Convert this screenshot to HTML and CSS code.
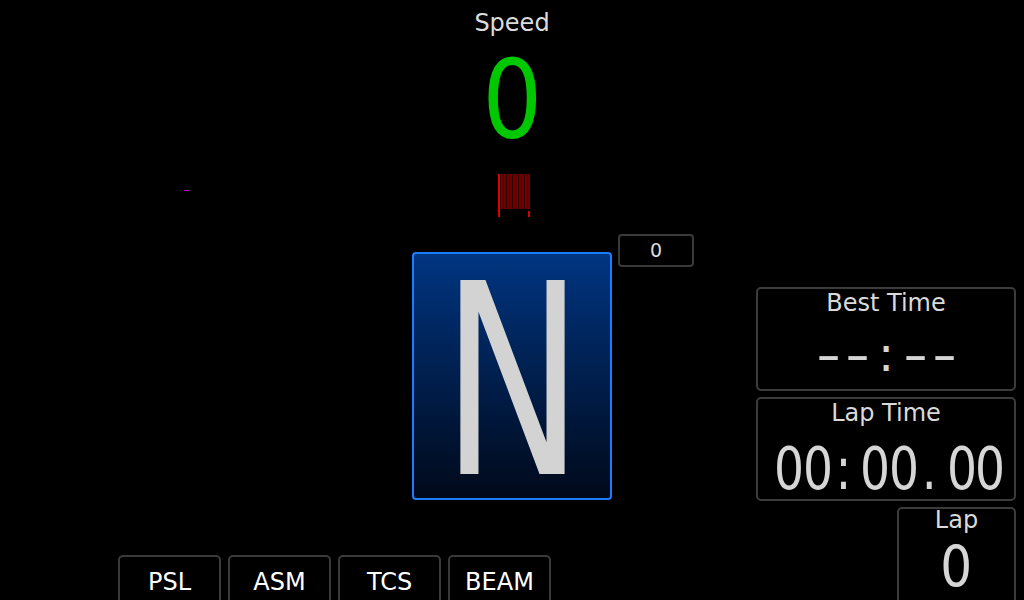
FILE: index.html
```html
<!DOCTYPE html>
<html lang="en">
<head>
<meta charset="utf-8">
<title>Dashboard</title>
<link rel="stylesheet" href="styles.css">
</head>
<body>
<div class="screen">
  <header class="top">
    <div class="speed-label">Speed</div>
    <div class="speed-value">0</div>
    <div class="rev-bar">
      <span class="rev-start"></span>
      <span class="rev-track">
        <span class="rev-fill"></span>
        <span class="rev-end"></span>
      </span>
    </div>
    <span class="marker"></span>
  </header>

  <div class="gear"><span class="gear-letter">N</span></div>
  <div class="mini-box">0</div>

  <aside class="timing">
    <section class="panel">
      <div class="panel-title">Best Time</div>
      <div class="best-value"><span class="cell dash">-</span><span class="cell dash">-</span><span class="cell">:</span><span class="cell dash">-</span><span class="cell dash">-</span></div>
    </section>
    <section class="panel">
      <div class="panel-title">Lap Time</div>
      <div class="lap-time-value"><span class="cell">0</span><span class="cell">0</span><span class="cell">:</span><span class="cell">0</span><span class="cell">0</span><span class="cell">.</span><span class="cell">0</span><span class="cell">0</span></div>
    </section>
    <section class="panel lap-panel">
      <div class="panel-title lap-title">Lap</div>
      <div class="lap-value">0</div>
    </section>
  </aside>

  <nav class="buttons">
    <div class="btn">PSL</div>
    <div class="btn">ASM</div>
    <div class="btn">TCS</div>
    <div class="btn">BEAM</div>
  </nav>
</div>
</body>
</html>
```
FILE: styles.css
```css
* { box-sizing: border-box; }

body {
  margin: 0;
  background: #000;
}

.screen {
  width: 1024px;
  height: 600px;
  overflow: hidden;
  background: #000;
  display: grid;
  grid-template-columns: 118px 294px 200px 144px 260px 8px;
  grid-template-rows: 252px 249px 99px;
  font-family: "DejaVu Sans", sans-serif;
  color: #dadada;
}

/* ---------- top: speed ---------- */
.top {
  grid-column: 1 / -1;
  grid-row: 1;
  display: flex;
  flex-direction: column;
  align-items: center;
  position: relative;
  padding-top: 9px;
}

.speed-label {
  font-size: 24px;
  line-height: 28px;
  color: #dcdcdc;
}

.speed-value {
  font-size: 108px;
  line-height: 126px;
  color: #00c800;
  transform: scaleX(0.875);
}

.rev-bar {
  margin-top: 11px;
  margin-left: 4px;
  display: flex;
  height: 43px;
}

.rev-start {
  width: 2px;
  height: 43px;
  background: #dc0000;
}

.rev-track {
  width: 30px;
  height: 43px;
  display: flex;
  flex-direction: column;
  justify-content: space-between;
  align-items: flex-end;
}

.rev-fill {
  width: 30px;
  height: 35px;
  background: repeating-linear-gradient(90deg, #2a0000 0 1px, #6e0000 1px 3px);
}

.rev-end {
  width: 2px;
  height: 6px;
  background: #dc0000;
}

.marker {
  position: absolute;
  left: 184px;
  top: 190px;
  width: 5px;
  height: 1px;
  background: #c800c8;
}

/* ---------- gear ---------- */
.gear {
  grid-column: 3;
  grid-row: 2;
  height: 248px;
  border: 2px solid #1a7dff;
  border-radius: 4px;
  background: linear-gradient(#003581, #00091a);
  display: flex;
  justify-content: center;
  align-items: center;
  padding-top: 12px;
}

.gear-letter {
  font-size: 266px;
  line-height: 200px;
  color: #d3d3d3;
  transform: scaleX(0.71);
}

.mini-box {
  grid-column: 4;
  grid-row: 2;
  align-self: start;
  justify-self: start;
  margin: -18px 0 0 6px;
  width: 76px;
  height: 33px;
  border: 2px solid #3a3a3a;
  border-radius: 4px;
  display: flex;
  align-items: center;
  justify-content: center;
  font-size: 19px;
  line-height: 19px;
  color: #dcdcdc;
}

/* ---------- timing panels ---------- */
.timing {
  grid-column: 5;
  grid-row: 2 / 4;
  display: flex;
  flex-direction: column;
  align-items: flex-end;
  gap: 6px;
  padding-top: 35px;
}

.panel {
  flex: none;
  width: 260px;
  height: 104px;
  border: 2px solid #3c3c3c;
  border-radius: 5px;
  display: flex;
  flex-direction: column;
  align-items: center;
}

.lap-panel { width: 119px; }

.panel-title {
  font-size: 24px;
  line-height: 28px;
  color: #dadada;
}

.lap-title {
  margin-top: -3px;
}

.cell {
  display: inline-block;
  text-align: center;
}

.best-value {
  margin-top: 13px;
  display: flex;
  font-size: 48px;
  line-height: 48px;
  color: #d6d6d6;
}

.best-value .cell { width: 29px; }
.best-value .dash { transform: scaleX(1.45); }

.lap-time-value {
  margin-top: 17px;
  display: flex;
  font-size: 59px;
  line-height: 50px;
  color: #d6d6d6;
}

.lap-time-value .cell {
  width: 28.75px;
  transform: scaleX(0.8);
}

.lap-value {
  margin-top: 8px;
  font-size: 57px;
  line-height: 50px;
  color: #d6d6d6;
  transform: scaleX(0.88);
}

/* ---------- buttons ---------- */
.buttons {
  grid-column: 2 / 5;
  grid-row: 3;
  display: flex;
  gap: 7px;
  padding-top: 54px;
}

.btn {
  flex: none;
  width: 103px;
  height: 60px;
  border: 2px solid #3a3a3a;
  border-radius: 5px;
  padding-top: 11px;
  text-align: center;
  font-size: 24px;
  line-height: 28px;
  color: #fff;
}
```
